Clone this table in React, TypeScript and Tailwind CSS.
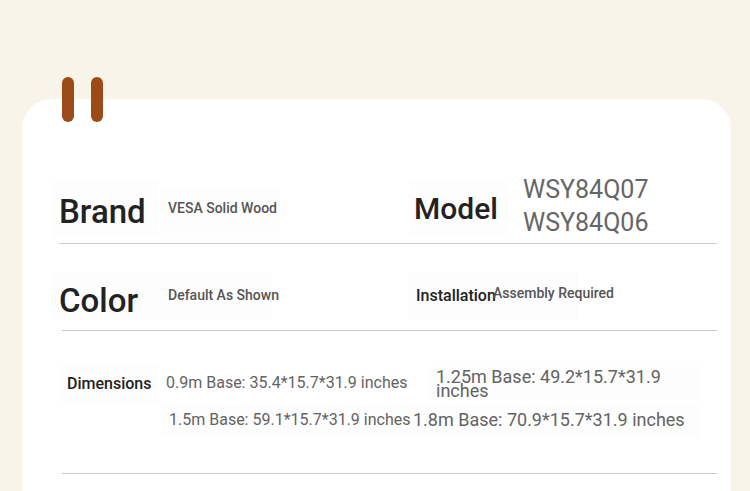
const font = "font-['Roboto','Liberation_Sans',sans-serif]";

export default function App() {
  return (
    <div className={`h-[491px] w-[750px] overflow-hidden bg-[#f8f4ea] pt-[77px] ${font}`}>
      {/* tab marks */}
      <div className="relative z-10 flex h-[45px] gap-[17px] pl-[62px]">
        <span className="h-[45px] w-[12px] rounded-full bg-[#9b4a18]" />
        <span className="h-[45px] w-[12px] rounded-full bg-[#9b4a18]" />
      </div>

      <div className="-mt-[23px] ml-[22px] h-[400px] w-[709px] rounded-t-[30px] bg-white">
        {/* Brand / Model */}
        <div className="ml-[37px] mr-[14px] flex h-[145px] border-b border-[#c9c9c9]">
          <div className="flex w-[331px] items-start">
            <div className="-ml-[7px] mt-[81px] h-[57px] w-[106px] bg-[#fdfdfd] pl-[7px] pt-[12px] text-[33px] leading-[40px] font-medium text-[#222]">
              Brand
            </div>
            <div className="ml-[2px] mt-[88px] h-[46px] w-[120px] whitespace-nowrap bg-[#fdfdfd] pl-[8px] pt-[11px] text-[14px] leading-[20px] font-medium text-[#555]">
              VESA Solid Wood
            </div>
          </div>
          <div className="flex flex-1 items-start">
            <div className="ml-[20px] mt-[81px] h-[55px] w-[98px] bg-[#fdfdfd] pl-[4px] pt-[11px] text-[30px] leading-[36px] font-medium text-[#222]">
              Model
            </div>
            <div className="ml-[15px] mt-[74px] text-[25px] leading-[33px] text-[#666]">
              <div>WSY84Q07</div>
              <div>WSY84Q06</div>
            </div>
          </div>
        </div>

        {/* Color / Installation */}
        <div className="ml-[40px] mr-[14px] flex h-[87px] border-b border-[#c9c9c9]">
          <div className="flex w-[328px] items-start">
            <div className="-ml-[10px] mt-[28px] h-[48px] w-[108px] bg-[#fdfdfd] pl-[7px] pt-[9px] text-[33px] leading-[40px] font-medium text-[#222]">
              Color
            </div>
            <div className="mt-[28px] h-[48px] w-[112px] whitespace-nowrap bg-[#fdfdfd] pl-[8px] pt-[13px] text-[14px] leading-[20px] font-medium text-[#555]">
              Default As Shown
            </div>
          </div>
          <div className="ml-[18px] mt-[28px] flex h-[48px] w-[170px] items-start bg-[#fdfdfd]">
            <div className="ml-[8px] mt-[14px] w-[77px] whitespace-nowrap text-[16px] leading-[20px] font-medium text-[#222]">
              Installation
            </div>
            <div className="mt-[11px] whitespace-nowrap text-[14px] leading-[20px] font-medium text-[#555]">
              Assembly Required
            </div>
          </div>
        </div>

        {/* Dimensions */}
        <div className="ml-[40px] mr-[14px] flex h-[143px] items-start border-b border-[#c9c9c9]">
          <div className="-ml-[3px] mt-[34px] h-[38px] w-[99px] bg-[#fdfdfd] pl-[8px] pt-[9px] text-[16px] leading-[20px] font-medium text-[#222]">
            Dimensions
          </div>
          <div className="flex flex-col text-[#636363]">
            <div className="mt-[36px] flex h-[38px] items-start">
              <div className="h-[36px] w-[270px] whitespace-nowrap pl-[8px] pt-[6px] text-[16px] leading-[20px]">
                0.9m Base: 35.4*15.7*31.9 inches
              </div>
              <div className="h-[33px] w-[273px] bg-[#fdfdfd] pl-[8px] pt-[3px]">
                <div className="w-[240px] text-[18px] leading-[14px]">1.25m Base: 49.2*15.7*31.9 inches</div>
              </div>
            </div>
            <div className="flex h-[32px] items-start">
              <div className="ml-[4px] h-[32px] w-[253px] whitespace-nowrap bg-[#fdfdfd] pl-[7px] pt-[5px] text-[16px] leading-[20px]">
                1.5m Base: 59.1*15.7*31.9 inches
              </div>
              <div className="-ml-[2px] h-[32px] w-[287px] whitespace-nowrap bg-[#fdfdfd] pt-[5px] text-[18px] leading-[20px]">
                1.8m Base: 70.9*15.7*31.9 inches
              </div>
            </div>
          </div>
        </div>
      </div>
    </div>
  );
}
